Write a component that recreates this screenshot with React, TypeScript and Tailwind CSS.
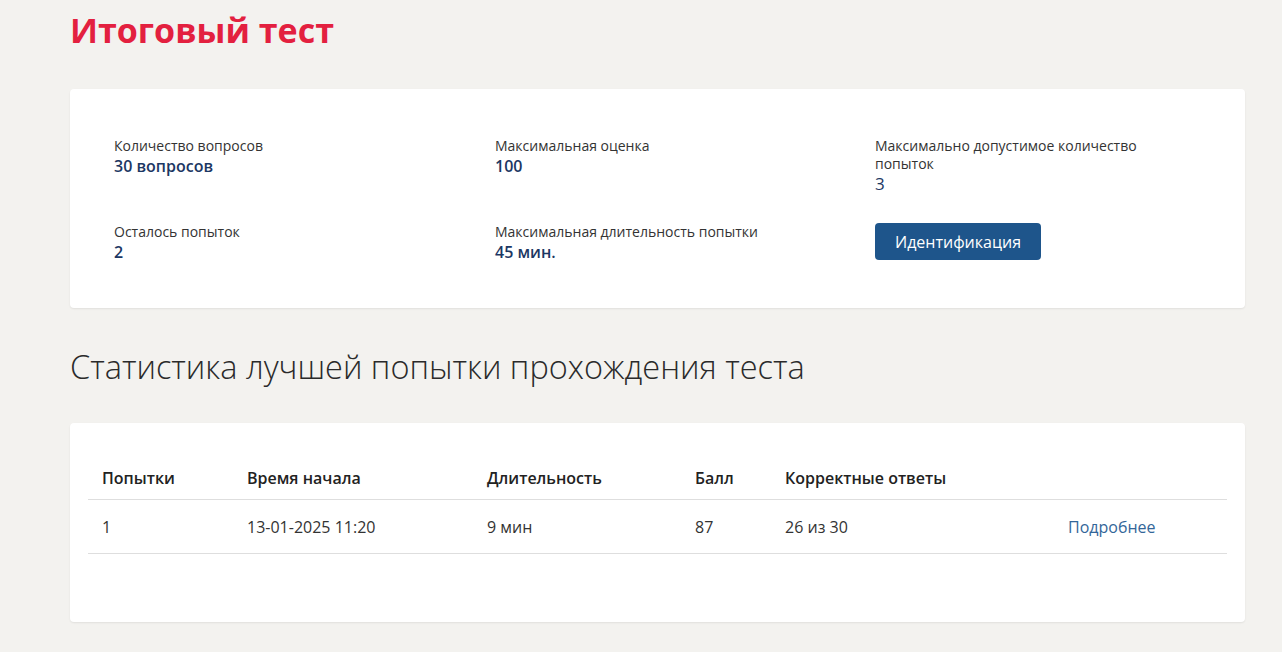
import React from 'react';

const info = [
  { label: "Количество вопросов", value: "30 вопросов", bold: true },
  { label: "Максимальная оценка", value: "100", bold: true },
  { label: "Максимально допустимое количество попыток", value: "3", bold: false },
  { label: "Осталось попыток", value: "2", bold: true },
  { label: "Максимальная длительность попытки", value: "45 мин.", bold: true },
];

const rows = [
  { attempt: "1", start: "13-01-2025 11:20", duration: "9 мин", score: "87", correct: "26 из 30" },
];

export default function App() {
  return (
    <div className="min-h-screen bg-[#f3f2ef] text-[#222] font-['Open_Sans','Noto_Sans',sans-serif]">
      <div className="pl-[70px] pr-[37px]">
        {/* Title */}
        <h1 className="pt-[6px] h-[89px] text-[34px] font-bold text-[#e3203f] leading-[48px]">
          Итоговый тест
        </h1>

        {/* Info card */}
        <div className="bg-white rounded-[4px] shadow-[0_1px_2px_rgba(0,0,0,0.08)] pl-[44px] pt-[48px] pb-[48px] h-[219px]">
          <div className="grid grid-cols-[381px_380px_300px] gap-y-[27px]">
            {info.map((item) => (
              <div key={item.label} className="min-h-[59px]">
                <div className="text-[14px] leading-[18px] text-[#333]">{item.label}</div>
                <div className={`text-[16px] leading-[22px] text-[#1c3763] ${item.bold ? 'font-semibold' : 'text-[17px]'}`}>{item.value}</div>
              </div>
            ))}
            <div>
              <button className="h-[37px] px-[20px] bg-[#1e558b] rounded-[4px] text-white text-[16px]">
                Идентификация
              </button>
            </div>
          </div>
        </div>

        {/* Stats heading */}
        <h2 className="pt-[37px] h-[115px] text-[32.5px] font-light text-[#2a2a2a] leading-[44px]">
          Статистика лучшей попытки прохождения теста
        </h2>

        {/* Stats card */}
        <div className="bg-white rounded-[4px] shadow-[0_1px_2px_rgba(0,0,0,0.08)] px-[18px] pt-[40px] h-[199px]">
          <table className="w-full text-left text-[16px] border-collapse">
            <thead>
              <tr className="border-b border-[#dedede]">
                <th className="pl-[14px] w-[159px] h-[36px] pb-[6px] font-semibold">Попытки</th>
                <th className="w-[240px] pb-[6px] font-semibold">Время начала</th>
                <th className="w-[208px] pb-[6px] font-semibold">Длительность</th>
                <th className="w-[90px] pb-[6px] font-semibold">Балл</th>
                <th className="w-[283px] pb-[6px] font-semibold">Корректные ответы</th>
                <th className="pb-[6px]"></th>
              </tr>
            </thead>
            <tbody>
              {rows.map((r) => (
                <tr key={r.attempt} className="border-b border-[#dedede] text-[#333]">
                  <td className="pl-[14px] h-[54px] pt-[2px]">{r.attempt}</td>
                  <td className="pt-[2px]">{r.start}</td>
                  <td className="pt-[2px]">{r.duration}</td>
                  <td className="pt-[2px]">{r.score}</td>
                  <td className="pt-[2px]">{r.correct}</td>
                  <td className="pt-[2px]"><a href="#" className="text-[#336699]">Подробнее</a></td>
                </tr>
              ))}
            </tbody>
          </table>
        </div>
      </div>
    </div>
  );
}
